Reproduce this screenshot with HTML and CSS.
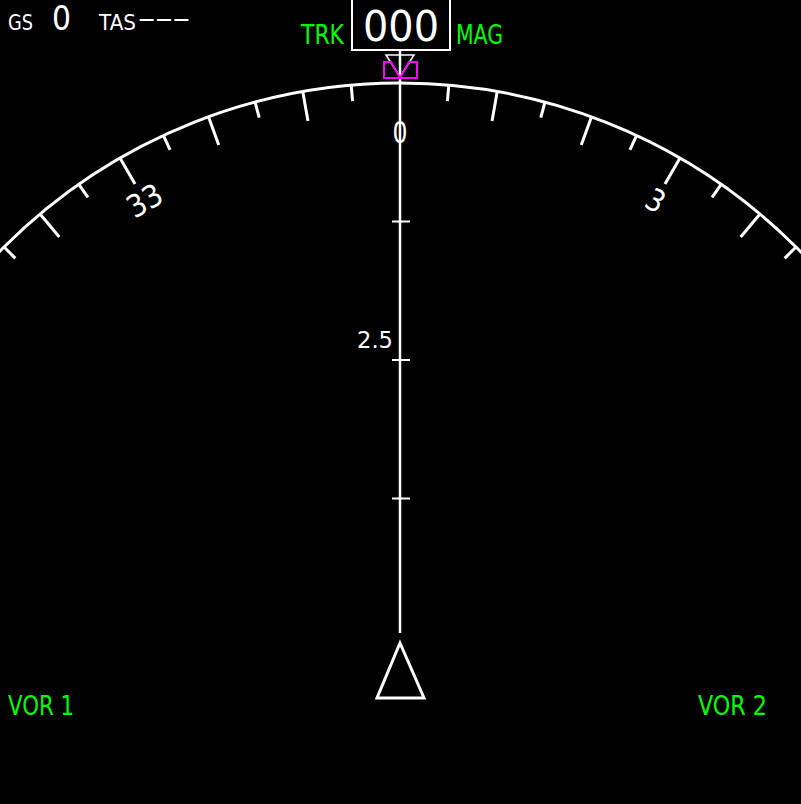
FILE: index.html
```html
<!DOCTYPE html>
<html>
<head>
<meta charset="utf-8">
<link rel="stylesheet" href="styles.css">
</head>
<body>
<div class="display">
<svg class="nd" width="801" height="804" viewBox="0 0 801 804">
  <!-- compass arc -->
  <circle class="stroke-w arc" cx="400" cy="643" r="560"/>
  <g class="stroke-w ticks">
    <line x1="400" y1="83" x2="400" y2="99" transform="rotate(5 400 643)"/>
    <line x1="400" y1="83" x2="400" y2="113" transform="rotate(10 400 643)"/>
    <line x1="400" y1="83" x2="400" y2="99" transform="rotate(15 400 643)"/>
    <line x1="400" y1="83" x2="400" y2="113" transform="rotate(20 400 643)"/>
    <line x1="400" y1="83" x2="400" y2="99" transform="rotate(25 400 643)"/>
    <line x1="400" y1="83" x2="400" y2="113" transform="rotate(30 400 643)"/>
    <line x1="400" y1="83" x2="400" y2="99" transform="rotate(35 400 643)"/>
    <line x1="400" y1="83" x2="400" y2="113" transform="rotate(40 400 643)"/>
    <line x1="400" y1="83" x2="400" y2="99" transform="rotate(45 400 643)"/>
    <line x1="400" y1="83" x2="400" y2="99" transform="rotate(-5 400 643)"/>
    <line x1="400" y1="83" x2="400" y2="113" transform="rotate(-10 400 643)"/>
    <line x1="400" y1="83" x2="400" y2="99" transform="rotate(-15 400 643)"/>
    <line x1="400" y1="83" x2="400" y2="113" transform="rotate(-20 400 643)"/>
    <line x1="400" y1="83" x2="400" y2="99" transform="rotate(-25 400 643)"/>
    <line x1="400" y1="83" x2="400" y2="113" transform="rotate(-30 400 643)"/>
    <line x1="400" y1="83" x2="400" y2="99" transform="rotate(-35 400 643)"/>
    <line x1="400" y1="83" x2="400" y2="113" transform="rotate(-40 400 643)"/>
    <line x1="400" y1="83" x2="400" y2="99" transform="rotate(-45 400 643)"/>
  </g>
  <g class="txt-w compass-lbl">
    <text x="400" y="143" textLength="15" lengthAdjust="spacingAndGlyphs">0</text>
    <text x="400" y="143" transform="rotate(30 400 643)" textLength="17" lengthAdjust="spacingAndGlyphs">3</text>
    <text x="400" y="143" transform="rotate(-30 400 643)" textLength="36" lengthAdjust="spacingAndGlyphs">33</text>
  </g>

  <!-- track line and range marks -->
  <line class="stroke-w track" x1="400" y1="50" x2="400" y2="633"/>
  <g class="stroke-w range">
    <line x1="392" y1="221.5" x2="410" y2="221.5"/>
    <line x1="392" y1="360" x2="410" y2="360"/>
    <line x1="392" y1="498.5" x2="410" y2="498.5"/>
  </g>
  <text class="txt-w range-lbl" x="393" y="348" textLength="36" lengthAdjust="spacingAndGlyphs">2.5</text>

  <!-- aircraft symbol -->
  <path class="stroke-w aircraft" d="M400 643 L424 698 L377 698 Z"/>

  <!-- heading box -->
  <rect class="stroke-w hdg-box" x="352" y="-3" width="98" height="53"/>
  <text class="txt-w hdg" x="401" y="41" textLength="76" lengthAdjust="spacingAndGlyphs">000</text>
  <text class="txt-g mode" x="301" y="44" textLength="43" lengthAdjust="spacingAndGlyphs">TRK</text>
  <text class="txt-g mode" x="456" y="44" textLength="47" lengthAdjust="spacingAndGlyphs">MAG</text>
  <path class="stroke-w pointer" d="M386 55 L414 55 L400 77 Z"/>
  <path class="stroke-m bug" d="M384 62 L391 62 L400 78 L409 62 L417 62 L417 78 L384 78 Z"/>

  <!-- speeds -->
  <text class="txt-w small" x="8" y="30" textLength="25" lengthAdjust="spacingAndGlyphs">GS</text>
  <text class="txt-w big" x="52" y="30" textLength="19" lengthAdjust="spacingAndGlyphs">0</text>
  <text class="txt-w small" x="99" y="30" textLength="37" lengthAdjust="spacingAndGlyphs">TAS</text>
  <text class="txt-w dashes" x="138" y="28" textLength="52" lengthAdjust="spacingAndGlyphs">–––</text>

  <!-- nav sources -->
  <text class="txt-g vor" x="8" y="715" textLength="66" lengthAdjust="spacingAndGlyphs">VOR 1</text>
  <text class="txt-g vor" x="698" y="715" textLength="69" lengthAdjust="spacingAndGlyphs">VOR 2</text>
</svg>
</div>
</body>
</html>
```

FILE: styles.css
```css
html, body {
  margin: 0;
  padding: 0;
  background: #000;
}
.display {
  width: 801px;
  height: 804px;
  background: #000;
  overflow: hidden;
}
.nd {
  display: block;
  font-family: "DejaVu Sans", sans-serif;
}
.stroke-w {
  stroke: #fff;
  fill: none;
  stroke-width: 3;
}
.stroke-m {
  stroke: #ff00ff;
  fill: none;
  stroke-width: 2;
}
.arc { stroke-width: 3; }
.ticks { stroke-width: 3; }
.track { stroke-width: 2.5; }
.range { stroke-width: 2; }
.pointer { stroke-width: 1.5; }
.hdg-box { stroke-width: 2; }
.aircraft { stroke-width: 3; stroke-linejoin: miter; }
.txt-w { fill: #fff; }
.txt-g { fill: #00ff00; }
.compass-lbl text {
  font-size: 31px;
  text-anchor: middle;
}
.range-lbl {
  font-size: 23px;
  text-anchor: end;
}
.hdg {
  font-size: 42px;
  text-anchor: middle;
}
.mode { font-size: 27px; }
.small { font-size: 22px; }
.big { font-size: 34px; }
.dashes {
  font-size: 28px;
}
.vor { font-size: 27px; }
```
